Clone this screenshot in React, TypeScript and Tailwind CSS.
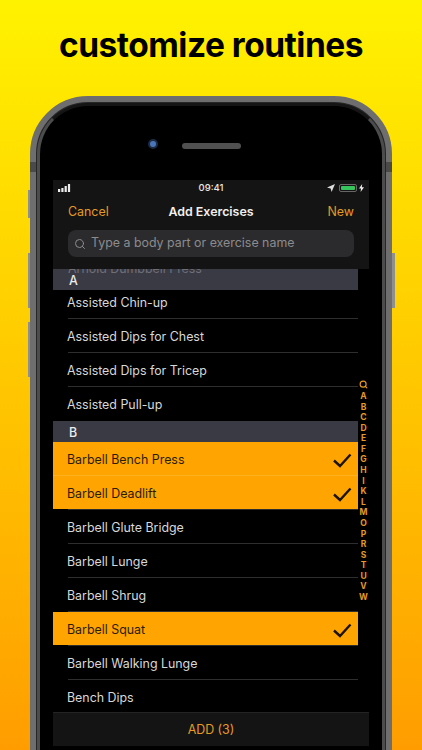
import { Search } from 'lucide-react';

const indexLetters = ['A', 'B', 'C', 'D', 'E', 'F', 'G', 'H', 'I', 'K', 'L', 'M', 'O', 'P', 'R', 'S', 'T', 'U', 'V', 'W'];

const sectionA = ['Assisted Chin-up', 'Assisted Dips for Chest', 'Assisted Dips for Tricep', 'Assisted Pull-up'];
const sectionB = [
  { name: 'Barbell Bench Press', selected: true },
  { name: 'Barbell Deadlift', selected: true },
  { name: 'Barbell Glute Bridge', selected: false },
  { name: 'Barbell Lunge', selected: false },
  { name: 'Barbell Shrug', selected: false },
  { name: 'Barbell Squat', selected: true },
  { name: 'Barbell Walking Lunge', selected: false },
  { name: 'Bench Dips', selected: false },
];

const Check = () => (
  <svg width="19" height="15" viewBox="0 0 19 15" fill="none" className="mr-[6px]">
    <path d="M1 7.5 L7 13 L17.5 1.5" stroke="#1c1408" strokeWidth="2.4" />
  </svg>
);

const ExerciseRow = ({ name, selected }: { name: string; selected?: boolean }) => (
  <div className={`flex h-[33px] items-center justify-between pl-[14px] pt-[4px] text-[12.4px] ${selected ? 'bg-[#ffa400] text-[#2a1c05]' : 'text-[#d8d8d8]'}`}>
    <span>{name}</span>
    {selected && <Check />}
  </div>
);

const Divider = ({ tinted }: { tinted?: boolean }) => (
  <div className={`h-px ${tinted ? 'bg-[#ffb01f]' : 'ml-[15px] bg-[#2e2e2e]'}`} />
);

const SectionHeader = ({ label }: { label: string }) => (
  <div className="relative z-10 flex h-[21px] items-center bg-[#3a3a44] pl-[16px] pt-[3px] text-[12.4px] font-medium text-[#ececec]">{label}</div>
);

const StatusBar = () => (
  <div className="grid h-[16px] grid-cols-3 items-center px-[5px] text-[9.5px] font-medium text-[#e8e8e8]">
    <svg width="13" height="8" viewBox="0 0 13 8" fill="#eeeeee">
      <rect x="0" y="5" width="2.2" height="3" />
      <rect x="3.3" y="4" width="2.2" height="4" />
      <rect x="6.6" y="2" width="2.2" height="6" />
      <rect x="9.9" y="0" width="2.2" height="8" />
    </svg>
    <span className="text-center">09:41</span>
    <div className="flex items-center justify-end gap-[4px]">
      <svg width="8" height="8" viewBox="0 0 8 8" fill="#dddddd">
        <path d="M8 0 L4.6 8 L3.6 4.4 L0 3.4 Z" />
      </svg>
      <div className="flex h-[8px] w-[18px] items-center rounded-[2px] border border-[#666666] p-px">
        <div className="h-full w-full rounded-[1px] bg-[#36c45c]" />
      </div>
      <svg width="5" height="8" viewBox="0 0 5 8" fill="#eeeeee" className="-ml-[2px]">
        <path d="M3.2 0 L0 4.6 H2 L1.6 8 L5 3.2 H2.8 Z" />
      </svg>
    </div>
  </div>
);

const Screen = () => (
  <div className="flex w-[316px] flex-col">
    <div className="h-[89px] bg-[#141414]">
      <StatusBar />
      <div className="grid h-[32px] grid-cols-[1fr_auto_1fr] items-center px-[15px] text-[12.4px]">
        <span className="text-[#e69a24]">Cancel</span>
        <span className="font-semibold text-[#f0f0f0]">Add Exercises</span>
        <span className="text-right text-[#e69a24]">New</span>
      </div>
      <div className="mx-[15px] mt-[2px] flex h-[27px] items-center gap-[5px] rounded-[8px] bg-[#2b2b2d] pl-[6px] text-[12.4px] text-[#8c8c8e]">
        <Search size={12} strokeWidth={2} />
        <span>Type a body part or exercise name</span>
      </div>
    </div>
    <div className="flex h-[443px] overflow-hidden">
      <div className="w-[305px]">
        <div className="relative">
          <SectionHeader label="A" />
          <div className="absolute inset-x-0 top-0 z-20 h-[5px] overflow-hidden pl-[15px]">
            <div className="-mt-[9px] text-[12.4px] text-[#6f6f78]">Arnold Dumbbell Press</div>
          </div>
        </div>
        <div className="-mt-[5px]">
          {sectionA.map((name, i) => (
            <div key={name}>
              <ExerciseRow name={name} />
              {i < sectionA.length - 1 && <Divider />}
            </div>
          ))}
        </div>
        <div className="pt-px">
          <SectionHeader label="B" />
        </div>
        {sectionB.map((row, i) => (
          <div key={row.name}>
            <ExerciseRow name={row.name} selected={row.selected} />
            {i < sectionB.length - 1 && <Divider tinted={row.selected && sectionB[i + 1].selected} />}
          </div>
        ))}
      </div>
      <div className="flex w-[11px] flex-col items-center pt-[111px] text-[8.5px] font-bold leading-[10.58px] text-[#e69a24]">
        <Search size={9} strokeWidth={3} className="mb-[2px]" />
        {indexLetters.map((letter) => (
          <span key={letter}>{letter}</span>
        ))}
      </div>
    </div>
    <div className="flex h-[34px] items-center justify-center border-t border-[#242424] bg-[#141414] pt-[2px] text-[12.4px] text-[#e69a24]">
      ADD (3)
    </div>
  </div>
);

export default function App() {
  return (
    <div
      className="flex h-[750px] w-[422px] flex-col overflow-hidden bg-gradient-to-b from-[#fff200] to-[#ff9d00]"
      style={{ fontFamily: 'Inter, "Noto Sans", sans-serif' }}
    >
      <h1 className="flex h-[96px] shrink-0 items-center justify-center pb-[6px] text-[33.5px] font-bold tracking-[-0.5px] text-black">
        customize routines
      </h1>
      <div className="relative mx-[30px] h-[720px] shrink-0 rounded-[58px] border-[6px] border-[#6e6e6e] bg-[#262626] p-px">
        <div className="absolute -left-[8px] top-[88px] h-[28px] w-[2px] bg-[#8f8f8f]" />
        <div className="absolute -left-[8px] top-[151px] h-[55px] w-[2px] bg-[#8f8f8f]" />
        <div className="absolute -left-[8px] top-[220px] h-[55px] w-[2px] bg-[#8f8f8f]" />
        <div className="absolute -right-[9px] top-[151px] h-[55px] w-[3px] bg-[#8f8f8f]" />
        <div className="absolute -left-[6px] top-[60px] h-[10px] w-[6px] bg-[#4a4a4a]" />
        <div className="absolute -right-[6px] top-[60px] h-[10px] w-[6px] bg-[#4a4a4a]" />
        <div className="h-full rounded-[51px] border-[3px] border-[#4c4c4c] border-t-[#151515] bg-black pl-[13px] pt-[74px]">
          <div className="relative">
            <div className="absolute -top-[41px] left-[95px] h-[10px] w-[10px] rounded-full border-[2px] border-[#1c2a44] bg-[#4a76b8]" />
            <div className="absolute -top-[37px] left-[129px] h-[6px] w-[59px] rounded-full bg-[#505050]" />
          </div>
          <Screen />
        </div>
      </div>
    </div>
  );
}
